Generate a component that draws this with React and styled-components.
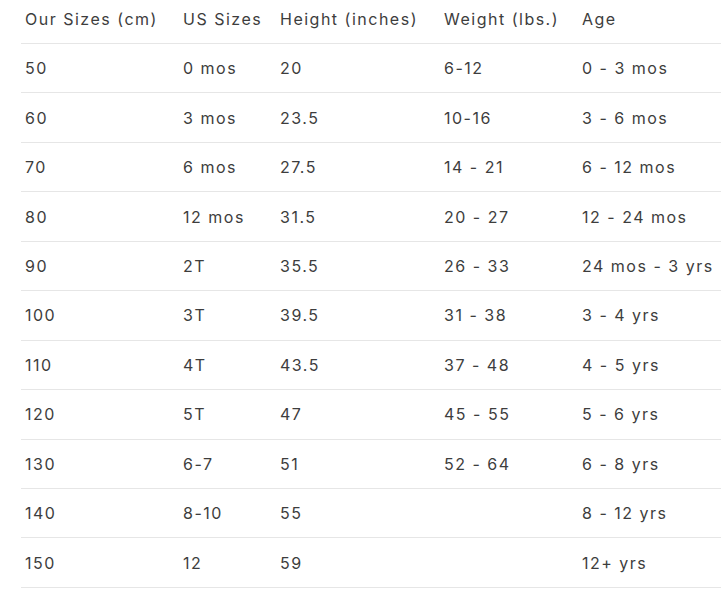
// Size chart table
import React from 'react';
import styled, { createGlobalStyle } from 'styled-components';

const GlobalStyle = createGlobalStyle`
    body {
        margin: 0;
        background-color: white;
        font-family: Inter, "Noto Sans", sans-serif;
        overflow: hidden;
    }
`;

const ChartWrapper = styled.div`
    padding-left: 21px;
    width: 760px;
`;

const SizeTable = styled.table`
    width: 100%;
    border-collapse: collapse;
    table-layout: fixed;
    color: #3d3d3d;
    font-size: 16px;
    letter-spacing: 1.5px;
`;

const HeaderCell = styled.th`
    text-align: left;
    font-weight: 400;
    height: 38px;
    padding: 0 0 5px 4px;
    vertical-align: middle;
    border-bottom: 1px solid #e6e6e6;
    width: ${props => props.$width || 'auto'};
    white-space: nowrap;
`;

const Row = styled.tr`
    height: 49.45px;
    border-bottom: 1px solid #e6e6e6;
`;

const Cell = styled.td`
    padding: 0 0 0 4px;
    vertical-align: middle;
    white-space: nowrap;
`;

const columns = [
    { label: 'Our Sizes (cm)', width: '154px' },
    { label: 'US Sizes', width: '93px' },
    { label: 'Height (inches)', width: '160px' },
    { label: 'Weight (lbs.)', width: '134px' },
    { label: 'Age' },
];

const rows = [
    ['50', '0 mos', '20', '6-12', '0 - 3 mos'],
    ['60', '3 mos', '23.5', '10-16', '3 - 6 mos'],
    ['70', '6 mos', '27.5', '14 - 21', '6 - 12 mos'],
    ['80', '12 mos', '31.5', '20 - 27', '12 - 24 mos'],
    ['90', '2T', '35.5', '26 - 33', '24 mos - 3 yrs'],
    ['100', '3T', '39.5', '31 - 38', '3 - 4 yrs'],
    ['110', '4T', '43.5', '37 - 48', '4 - 5 yrs'],
    ['120', '5T', '47', '45 - 55', '5 - 6 yrs'],
    ['130', '6-7', '51', '52 - 64', '6 - 8 yrs'],
    ['140', '8-10', '55', '', '8 - 12 yrs'],
    ['150', '12', '59', '', '12+ yrs'],
];

const App = () => {
    return (
        <ChartWrapper>
            <GlobalStyle />
            <SizeTable>
                <thead>
                    <tr>
                        {columns.map(col => (
                            <HeaderCell key={col.label} $width={col.width}>{col.label}</HeaderCell>
                        ))}
                    </tr>
                </thead>
                <tbody>
                    {rows.map(row => (
                        <Row key={row[0]}>
                            {row.map((value, i) => (
                                <Cell key={i}>{value}</Cell>
                            ))}
                        </Row>
                    ))}
                </tbody>
            </SizeTable>
        </ChartWrapper>
    );
};

export default App;
